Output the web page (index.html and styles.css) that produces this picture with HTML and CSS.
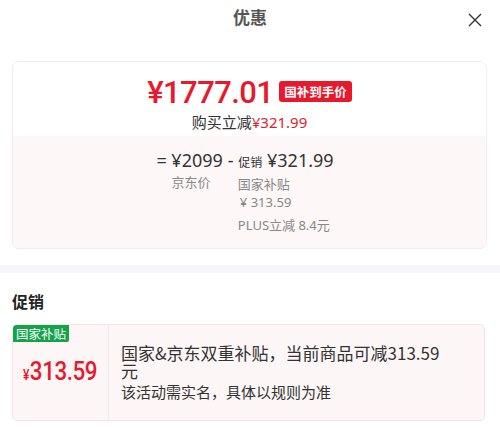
FILE: index.html
```html
<!DOCTYPE html>
<html lang="zh-CN">
<head>
    <meta charset="UTF-8">
    <meta name="viewport" content="width=device-width, initial-scale=1.0">
    <title>优惠</title>
    <link rel="stylesheet" href="styles.css">
</head>
<body>
    <div class="sheet">
        <div class="header">
            <h1>优惠</h1>
            <span class="close">
                <svg width="16" height="16" viewBox="0 0 16 16"><path d="M2 2 L14 14 M14 2 L2 14" stroke="#333" stroke-width="1.4" fill="none"/></svg>
            </span>
        </div>

        <div class="price-card">
            <div class="price-top">
                <div class="final-row">
                    <span class="final-price">¥1777.01</span>
                    <span class="final-badge">国补到手价</span>
                </div>
                <div class="save-line">购买立减<span class="red">¥321.99</span></div>
            </div>
            <div class="price-detail">
                <div class="formula">
                    <div class="col">
                        <div class="big">= ¥2099</div>
                        <div class="sub sub-jd">京东价</div>
                    </div>
                    <div class="col">
                        <div class="big">- <span class="tiny">促销</span> ¥321.99</div>
                        <div class="sub">国家补贴</div>
                        <div class="sub sub-indent">¥ 313.59</div>
                        <div class="sub sub-plus">PLUS立减 8.4元</div>
                    </div>
                </div>
            </div>
        </div>

        <div class="gap"></div>

        <div class="promo">
            <h2>促销</h2>
            <div class="promo-card">
                <div class="promo-left">
                    <span class="promo-tag">国家补贴</span>
                    <div class="promo-amount"><span class="yen">¥</span>313.59</div>
                </div>
                <div class="promo-right">
                    <p class="promo-title">国家&amp;京东双重补贴，当前商品可减313.59元</p>
                    <p class="promo-note">该活动需实名，具体以规则为准</p>
                </div>
            </div>
        </div>
    </div>
</body>
</html>
```

FILE: styles.css
```css
body {
    margin: 0;
    font-family: "Noto Sans CJK SC", "Noto Sans", sans-serif;
    background: #fff;
    color: #333;
}

.sheet {
    width: 500px;
}

.header {
    position: relative;
    height: 34px;
    display: flex;
    justify-content: center;
    align-items: center;
}
.header h1 {
    margin: 0;
    font-size: 17px;
    font-weight: bold;
    color: #555;
    line-height: 34px;
}
.close {
    position: absolute;
    right: 17px;
    top: 9px;
    width: 16px;
    height: 16px;
}

.price-card {
    margin: 27px 13px 0 12px;
    border: 1px solid #eee;
    border-radius: 7px;
    overflow: hidden;
}
.price-top {
    height: 74px;
    text-align: center;
    padding-top: 13px;
    box-sizing: border-box;
    background: #fff;
}
.final-row {
    display: flex;
    justify-content: center;
    align-items: center;
    height: 36px;
}
.final-price {
    font-family: Roboto, "Noto Sans", sans-serif;
    font-weight: 500;
    font-size: 31px;
    color: #e8192c;
    line-height: 36px;
    letter-spacing: -0.6px;
}
.final-badge {
    margin-left: 6px;
    margin-top: -4px;
    background: #e8192c;
    color: #fff;
    font-size: 12.5px;
    font-weight: bold;
    padding: 0 5px;
    height: 21px;
    line-height: 21px;
    border-radius: 3px;
}
.save-line {
    font-size: 15px;
    line-height: 18px;
    color: #333;
    margin-top: 2px;
}
.red {
    color: #e8192c;
    font-family: "Noto Sans", sans-serif;
}

.price-detail {
    position: relative;
    background: #fdf7f7;
    height: 112px;
    padding-top: 12px;
    box-sizing: border-box;
}
.price-detail::before {
    content: "";
    position: absolute;
    left: 235px;
    top: -6px;
    border-left: 6px solid transparent;
    border-right: 6px solid transparent;
    border-bottom: 6px solid #fdf7f7;
}
.formula {
    display: flex;
    justify-content: center;
    gap: 5px;
    margin-left: -9px;
}
.big {
    font-family: "Noto Sans", "Noto Sans CJK SC", sans-serif;
    font-size: 18px;
    line-height: 24px;
    color: #333;
}
.tiny {
    font-size: 12px;
    font-family: "Noto Sans CJK SC", sans-serif;
}
.sub {
    font-size: 13px;
    color: #888;
    line-height: 19px;
    padding-left: 10px;
}
.sub-jd {
    padding-left: 15px;
}
.sub-indent {
    padding-left: 12px;
    font-family: "Noto Sans", sans-serif;
}
.sub-plus {
    margin-top: 4px;
    font-family: "Noto Sans", "Noto Sans CJK SC", sans-serif;
}

.gap {
    margin-top: 16px;
    height: 8px;
    background: #f6f6f9;
}

.promo {
    padding: 0 15px 0 12px;
}
.promo h2 {
    margin: 0;
    font-size: 16px;
    font-weight: bold;
    color: #222;
    line-height: 20px;
    padding: 18px 0 13px;
}
.promo-card {
    display: flex;
    height: 95px;
    border: 1px solid #f0e6e6;
    border-radius: 5px;
    background: #fdf6f6;
    overflow: hidden;
}
.promo-left {
    position: relative;
    width: 95px;
    border-right: 1px solid #f2e8e8;
    display: flex;
    align-items: center;
    justify-content: center;
}
.promo-tag {
    position: absolute;
    left: 0;
    top: 0;
    background: #14a34a;
    color: #fff;
    font-size: 12.5px;
    line-height: 17px;
    padding: 0 3px;
    border-bottom-right-radius: 2px;
}
.promo-amount {
    margin-top: 0;
    font-family: Roboto, "Noto Sans", sans-serif;
    font-weight: 500;
    font-size: 26px;
    line-height: 30px;
    color: #e8192c;
    letter-spacing: -0.5px;
    transform: scaleX(0.86);
}
.yen {
    font-size: 14px;
    margin-right: 1px;
}
.promo-right {
    padding: 19px 30px 0 12px;
    flex: 1;
}
.promo-right p {
    margin: 0;
    color: #333;
    font-size: 17px;
    line-height: 18px;
}
.promo-right .promo-note {
    margin-top: 2px;
    font-size: 15px;
    line-height: 20px;
}
```
